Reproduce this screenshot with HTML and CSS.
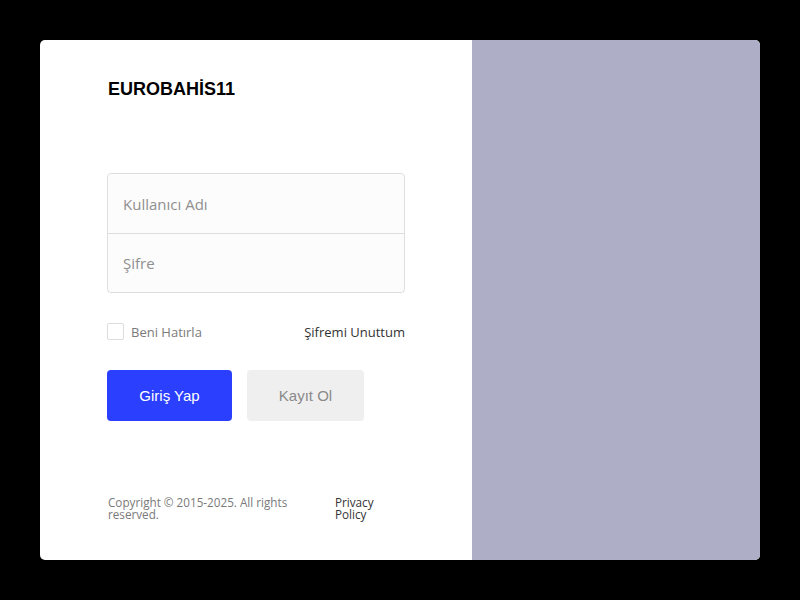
FILE: index.html
```html
<!DOCTYPE html>
<html lang="tr">
<head>
<meta charset="utf-8">
<title>EUROBAHİS11</title>
<link rel="stylesheet" href="styles.css">
</head>
<body>
<div class="card">
  <div class="panel">
    <div class="logo">EUROBAHİS11</div>
    <form class="form">
      <div class="fields">
        <input class="field" type="text" placeholder="Kullanıcı Adı">
        <input class="field" type="password" placeholder="Şifre">
      </div>
      <div class="options">
        <label class="remember"><span class="check"></span>Beni Hatırla</label>
        <a class="forgot" href="#">Şifremi Unuttum</a>
      </div>
      <div class="actions">
        <button class="btn btn-primary" type="button">Giriş Yap</button>
        <button class="btn btn-secondary" type="button">Kayıt Ol</button>
      </div>
    </form>
    <div class="footer">
      <div class="copy">Copyright © 2015-2025. All rights reserved.</div>
      <a class="privacy" href="#">Privacy Policy</a>
    </div>
  </div>
  <div class="side"></div>
</div>
</body>
</html>
```
FILE: styles.css
```css
* { box-sizing: border-box; }
html, body { margin: 0; padding: 0; background: #000; }
body {
  width: 800px;
  height: 600px;
  padding: 40px;
  font-family: "Open Sans", "Noto Sans", sans-serif;
}
.card {
  display: flex;
  width: 720px;
  height: 520px;
  border-radius: 5px;
  overflow: hidden;
  background: #fff;
}
.panel {
  width: 432px;
  padding: 39px 67px 40px 67px;
  display: flex;
  flex-direction: column;
}
.side {
  flex: 1;
  background: #aeaec6;
}
.logo {
  font-family: "Liberation Sans", Arial, sans-serif;
  font-weight: 700;
  font-size: 18px;
  line-height: 20px;
  color: #000;
  padding-left: 1px;
}
.form {
  margin-top: 74px;
  width: 298px;
}
.fields {
  border: 1px solid #dedede;
  border-radius: 4px;
  background: #fcfcfc;
  display: flex;
  flex-direction: column;
}
.field {
  display: block;
  width: 100%;
  height: 59px;
  border: 0;
  background: transparent;
  padding: 0 15px;
  font-family: "Open Sans", "Noto Sans", sans-serif;
  font-size: 15px;
  color: #333;
  outline: none;
}
.field + .field { border-top: 1px solid #dedede; }
.field::placeholder { color: #8f8f8f; }
.options {
  display: flex;
  justify-content: space-between;
  align-items: center;
  margin-top: 30px;
  height: 17px;
  font-size: 13px;
}
.remember {
  display: flex;
  align-items: center;
  color: #7a7a7a;
}
.check {
  width: 17px;
  height: 17px;
  border: 1px solid #dcdcdc;
  border-radius: 2px;
  margin-right: 7px;
  background: #fff;
}
.forgot {
  color: #333;
  text-decoration: none;
}
.actions {
  display: flex;
  gap: 15px;
  margin-top: 30px;
}
.btn {
  height: 51px;
  border: 0;
  border-radius: 4px;
  font-family: "Liberation Sans", Arial, sans-serif;
  font-size: 15px;
  cursor: pointer;
}
.btn-primary {
  width: 125px;
  background: #2b40ff;
  color: #fff;
}
.btn-secondary {
  width: 117px;
  background: #efefef;
  color: #8a8a8a;
}
.footer {
  margin-top: auto;
  display: flex;
  font-size: 11.7px;
  line-height: 12px;
  width: 298px;
}
.copy {
  width: 190px;
  color: #7a7a7a;
  padding-left: 1px;
}
.privacy {
  margin-left: 38px;
  width: 45px;
  color: #333;
  text-decoration: none;
}
```
